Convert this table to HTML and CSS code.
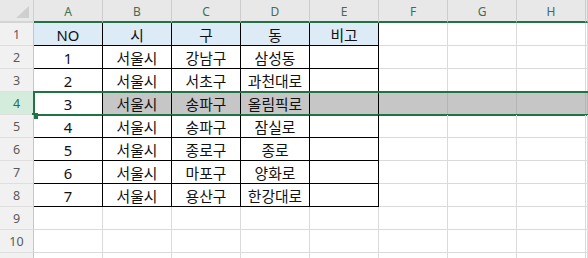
FILE: index.html
```html
<!DOCTYPE html>
<html lang="ko">
<head>
<meta charset="utf-8">
<title>Sheet1</title>
<link rel="stylesheet" href="styles.css">
</head>
<body>
<div class="sheet">
  <div class="row hd">
    <div class="corner"><svg class="tri" width="14" height="13" viewBox="0 0 14 13"><polygon points="13,0 13,12 0,12" fill="#cfcfcf"/></svg></div>
    <div class="ch">A</div><div class="ch">B</div><div class="ch">C</div><div class="ch">D</div>
    <div class="ch">E</div><div class="ch">F</div><div class="ch">G</div><div class="ch">H</div><div class="ch"></div>
  </div>

  <div class="row">
    <div class="rh">1</div>
    <div class="c t blue">NO</div><div class="c t blue">시</div><div class="c t blue">구</div><div class="c t blue">동</div><div class="c t blue">비고</div>
    <div class="c"></div><div class="c"></div><div class="c"></div><div class="c"></div>
  </div>
  <div class="row">
    <div class="rh">2</div>
    <div class="c t">1</div><div class="c t">서울시</div><div class="c t">강남구</div><div class="c t">삼성동</div><div class="c t"></div>
    <div class="c"></div><div class="c"></div><div class="c"></div><div class="c"></div>
  </div>
  <div class="row">
    <div class="rh">3</div>
    <div class="c t">2</div><div class="c t">서울시</div><div class="c t">서초구</div><div class="c t">과천대로</div><div class="c t"></div>
    <div class="c"></div><div class="c"></div><div class="c"></div><div class="c"></div>
  </div>
  <div class="row picked">
    <div class="rh">4</div>
    <div class="c t">3</div><div class="c t g">서울시</div><div class="c t g">송파구</div><div class="c t g">올림픽로</div><div class="c t g"></div>
    <div class="c g"></div><div class="c g"></div><div class="c g"></div><div class="c g"></div>
    <div class="frame"><span class="handle"></span></div>
  </div>
  <div class="row">
    <div class="rh">5</div>
    <div class="c t">4</div><div class="c t">서울시</div><div class="c t">송파구</div><div class="c t">잠실로</div><div class="c t"></div>
    <div class="c"></div><div class="c"></div><div class="c"></div><div class="c"></div>
  </div>
  <div class="row">
    <div class="rh">6</div>
    <div class="c t">5</div><div class="c t">서울시</div><div class="c t">종로구</div><div class="c t">종로</div><div class="c t"></div>
    <div class="c"></div><div class="c"></div><div class="c"></div><div class="c"></div>
  </div>
  <div class="row">
    <div class="rh">7</div>
    <div class="c t">6</div><div class="c t">서울시</div><div class="c t">마포구</div><div class="c t">양화로</div><div class="c t"></div>
    <div class="c"></div><div class="c"></div><div class="c"></div><div class="c"></div>
  </div>
  <div class="row">
    <div class="rh">8</div>
    <div class="c t">7</div><div class="c t">서울시</div><div class="c t">용산구</div><div class="c t">한강대로</div><div class="c t"></div>
    <div class="c"></div><div class="c"></div><div class="c"></div><div class="c"></div>
  </div>
  <div class="row">
    <div class="rh">9</div>
    <div class="c"></div><div class="c"></div><div class="c"></div><div class="c"></div><div class="c"></div>
    <div class="c"></div><div class="c"></div><div class="c"></div><div class="c"></div>
  </div>
  <div class="row">
    <div class="rh">10</div>
    <div class="c"></div><div class="c"></div><div class="c"></div><div class="c"></div><div class="c"></div>
    <div class="c"></div><div class="c"></div><div class="c"></div><div class="c"></div>
  </div>
  <div class="row">
    <div class="rh"></div>
    <div class="c"></div><div class="c"></div><div class="c"></div><div class="c"></div><div class="c"></div>
    <div class="c"></div><div class="c"></div><div class="c"></div><div class="c"></div>
  </div>
</div>
</body>
</html>
```
FILE: styles.css
```css
html, body {
  margin: 0;
  padding: 0;
  background: #ffffff;
  overflow: hidden;
}

.sheet {
  width: 588px;
  height: 258px;
  overflow: hidden;
  font-family: "Noto Sans", "Noto Sans CJK KR", sans-serif;
}

.row {
  position: relative;
  display: grid;
  grid-template-columns: 34px repeat(8, 69px) 1fr;
  height: 23px;
}

/* column header strip */
.hd {
  background: #e8e8e8;
}
.corner {
  position: relative;
  border-right: 1px solid #d0d0d0;
  border-bottom: 2px solid #d4d4d4;
}
.tri {
  position: absolute;
  right: 3px;
  bottom: 2px;
}
.ch {
  display: flex;
  align-items: center;
  justify-content: center;
  border-right: 1px solid #cdcdcd;
  border-bottom: 2px solid #217346;
  font-size: 12px;
  color: #3f6e56;
  padding-top: 1px;
}

/* row header column */
.rh {
  display: flex;
  align-items: center;
  justify-content: center;
  background: #f1f1f1;
  border-right: 1px solid #c6c6c6;
  border-bottom: 1px solid #dedede;
  font-size: 12.5px;
  color: #5a5a5a;
  padding-top: 1px;
}

/* worksheet cells */
.c {
  display: flex;
  align-items: center;
  justify-content: center;
  border-right: 1px solid #dadada;
  border-bottom: 1px solid #dadada;
  font-size: 14.8px;
  color: #111111;
  white-space: nowrap;
  overflow: hidden;
  padding-top: 1px;
}
.c.t {
  border-right-color: #000000;
  border-bottom-color: #000000;
}
.c.blue {
  background: #ddebf7;
}
.c.g {
  background: #c6c6c6;
  border-right-color: #b4b4b4;
}
.c.t.g {
  border-right-color: #000000;
}

/* selected row */
.picked .rh {
  background: #d3ecdc;
  color: #217346;
}
.frame {
  position: absolute;
  left: 33px;
  top: -1px;
  width: 600px;
  height: 21px;
  border: 2px solid #217346;
  border-right: none;
  pointer-events: none;
}
.handle {
  position: absolute;
  left: -3px;
  bottom: -5px;
  width: 6px;
  height: 6px;
  background: #217346;
}
```
